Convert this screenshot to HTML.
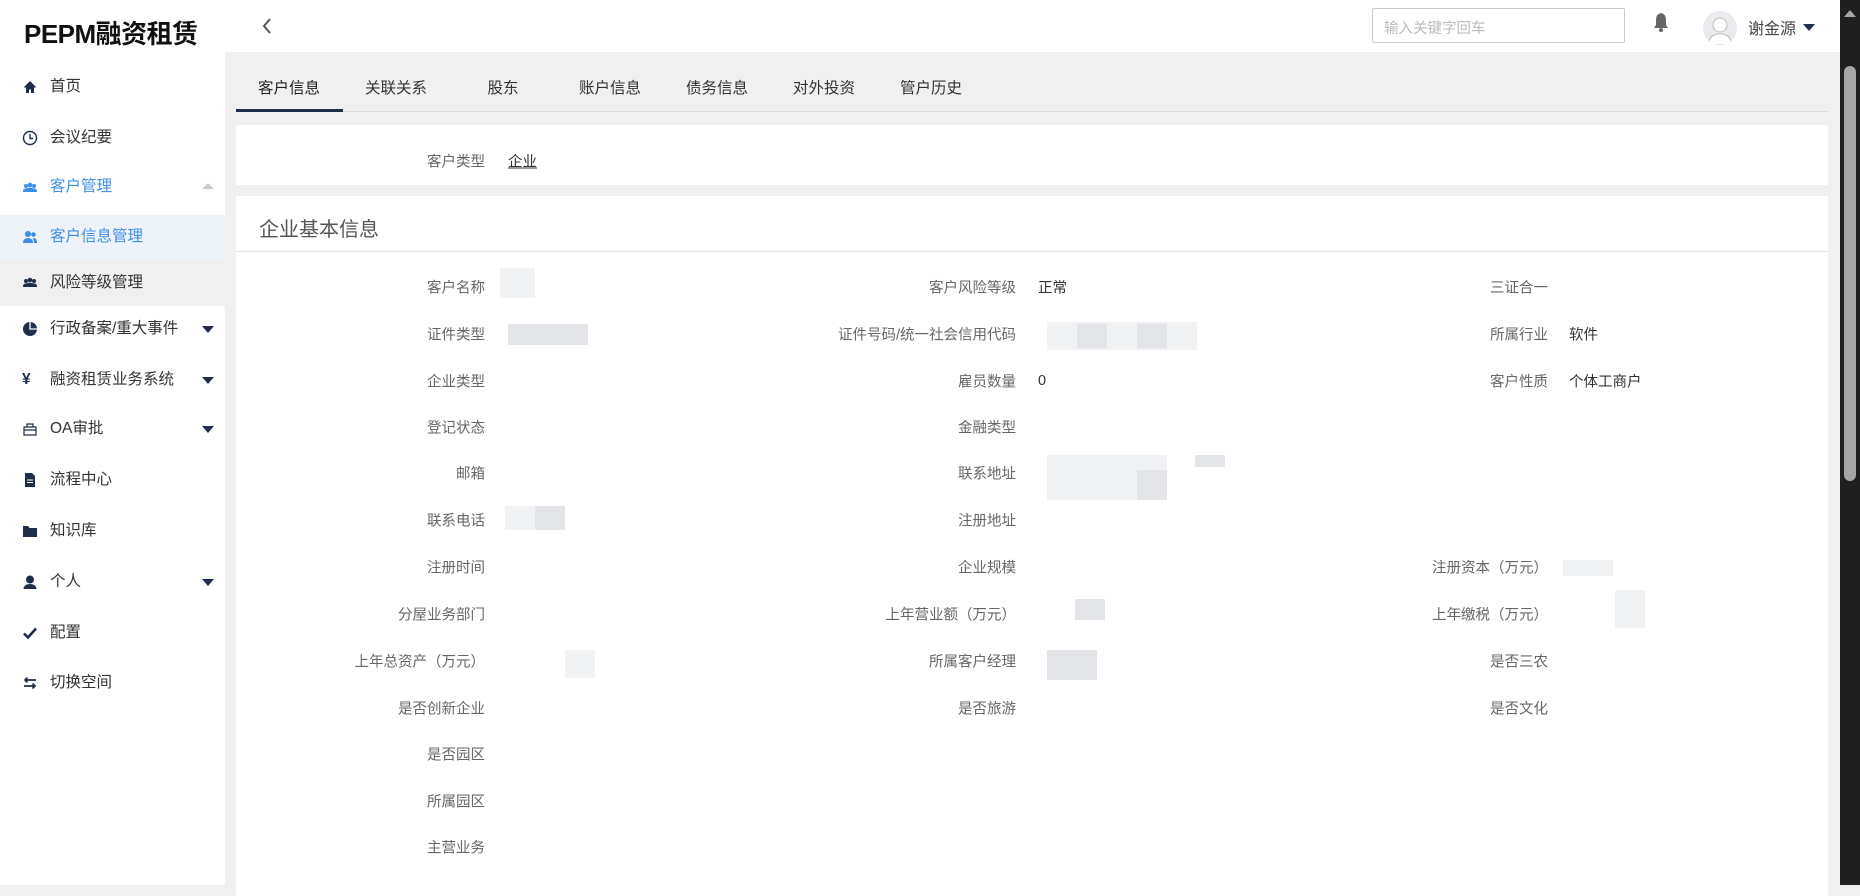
<!DOCTYPE html>
<html><head><meta charset="utf-8"><style>
*{margin:0;padding:0;box-sizing:border-box}
body{width:1860px;height:885px;overflow:hidden;background:#f0f0f0;font-family:"Liberation Sans","Noto Sans CJK SC",sans-serif;position:relative;color:#333}
.abs{position:absolute}
#side{left:0;top:0;width:225px;height:885px;background:#fff}
.logo{left:24px;top:14px;font-size:26px;font-weight:bold;color:#111;letter-spacing:-0.5px}
.mi{position:absolute;left:0;width:225px;height:46px;line-height:46px;font-size:15.5px;color:#333}
.mi .ic{position:absolute;left:22px;top:15px;width:16px;height:16px}
.mi .tx{position:absolute;left:50px}
.mi .ar{position:absolute;left:202px;top:20px;width:0;height:0;border-left:6px solid transparent;border-right:6px solid transparent;border-top:7px solid #1e2d4a}
#top{left:225px;top:0;width:1615px;height:52px;background:#fff}
.tab{position:absolute;top:76px;font-size:15.5px;color:#333;transform:translateX(-50%)}
.lbl{position:absolute;font-size:14.5px;color:#666;text-align:right;transform:translate(-100%,-50%);white-space:nowrap}
.val{position:absolute;font-size:14.5px;color:#333;transform:translateY(-50%);white-space:nowrap}
.bl{position:absolute;background:#e3e5e9}
.bl2{position:absolute;background:#f1f2f4}
</style></head><body>
<div id="side" class="abs">
<div class="abs logo">PEPM融资租赁</div>
<div class="mi" style="top:64px"><svg class="ic" viewBox="0 0 16 16"><path d="M8 2L1.5 8.5H4V14H7V10.5H9V14H12V8.5H14.5Z" fill="#1e2d4a"/></svg><span class="tx">首页</span></div>
<div class="mi" style="top:115px"><svg class="ic" viewBox="0 0 16 16"><circle cx="8" cy="8" r="6.5" fill="none" stroke="#1e2d4a" stroke-width="1.4"/><path d="M8 4V8.5H11" fill="none" stroke="#1e2d4a" stroke-width="1.4"/></svg><span class="tx">会议纪要</span></div>
<div class="mi" style="top:164px;color:#3d8fe8"><svg class="ic" viewBox="0 0 16 16"><circle cx="4" cy="7" r="2" fill="#3d8fe8"/><circle cx="8" cy="6" r="2.3" fill="#3d8fe8"/><circle cx="12" cy="7" r="2" fill="#3d8fe8"/><path d="M1 13Q1 9 4 9.5Q8 8 12 9.5Q15 9 15 13Z" fill="#3d8fe8"/></svg><span class="tx">客户管理</span><span style="position:absolute;left:202px;top:19px;border-left:6px solid transparent;border-right:6px solid transparent;border-bottom:6px solid #ccc"></span></div>
<div class="mi" style="top:215px;height:44px;line-height:44px;background:#eef3f9;color:#3d8fe8"><svg class="ic" viewBox="0 0 16 16" style="top:14px"><circle cx="6" cy="5" r="3" fill="#3d8fe8"/><circle cx="11.5" cy="5.5" r="2.3" fill="#3d8fe8"/><path d="M1 14Q1 9 6 9Q11 9 11 14Z M11.5 9Q15 9 15 14H12Q12 11 10.5 9.3Z" fill="#3d8fe8"/></svg><span class="tx">客户信息管理</span></div>
<div class="mi" style="top:259px;height:47px;line-height:47px;background:#f0f0f0"><svg class="ic" viewBox="0 0 16 16"><circle cx="4" cy="7" r="2" fill="#1e2d4a"/><circle cx="8" cy="6" r="2.3" fill="#1e2d4a"/><circle cx="12" cy="7" r="2" fill="#1e2d4a"/><path d="M1 13Q1 9 4 9.5Q8 8 12 9.5Q15 9 15 13Z" fill="#1e2d4a"/></svg><span class="tx">风险等级管理</span></div>
<div class="mi" style="top:306px"><svg class="ic" viewBox="0 0 16 16"><circle cx="8" cy="8" r="7" fill="#1e2d4a"/><path d="M8 1V8H15" fill="none" stroke="#fff" stroke-width="1.3"/></svg><span class="tx">行政备案/重大事件</span><span class="ar"></span></div>
<div class="mi" style="top:357px"><span style="position:absolute;left:22px;font-weight:bold;color:#1e2d4a">¥</span><span class="tx">融资租赁业务系统</span><span class="ar"></span></div>
<div class="mi" style="top:406px"><svg class="ic" viewBox="0 0 16 16"><path d="M2 6H14V14H2Z M2 9H14 M5 6V3H11V6" fill="none" stroke="#1e2d4a" stroke-width="1.2"/></svg><span class="tx">OA审批</span><span class="ar"></span></div>
<div class="mi" style="top:457px"><svg class="ic" viewBox="0 0 16 16"><path d="M3 1H10L13 4V15H3Z" fill="#1e2d4a"/><path d="M5 8H11M5 10.5H11" stroke="#fff" stroke-width="1"/></svg><span class="tx">流程中心</span></div>
<div class="mi" style="top:508px"><svg class="ic" viewBox="0 0 16 16"><path d="M1 3H6L7.5 5H15V14H1Z" fill="#1e2d4a"/></svg><span class="tx">知识库</span></div>
<div class="mi" style="top:559px"><svg class="ic" viewBox="0 0 16 16"><circle cx="8" cy="5.5" r="4" fill="#1e2d4a"/><path d="M1.5 15Q2 10 8 10Q14 10 14.5 15Z" fill="#1e2d4a"/></svg><span class="tx">个人</span><span class="ar"></span></div>
<div class="mi" style="top:610px"><svg class="ic" viewBox="0 0 16 16"><path d="M2 8.5L6 12.5L14 3.5" fill="none" stroke="#1e2d4a" stroke-width="2.6"/></svg><span class="tx">配置</span></div>
<div class="mi" style="top:660px"><svg class="ic" viewBox="0 0 16 16"><path d="M14 5H3M5.5 2.5L3 5L5.5 7.5M2 11H13M10.5 8.5L13 11L10.5 13.5" fill="none" stroke="#1e2d4a" stroke-width="1.7"/></svg><span class="tx">切换空间</span></div>
</div>
<div id="top" class="abs">
<svg class="abs" style="left:36px;top:17px" width="12" height="18" viewBox="0 0 12 18"><path d="M9 2L3 9L9 16" fill="none" stroke="#555" stroke-width="2"/></svg>
<div class="abs" style="left:1147px;top:8px;width:253px;height:35px;border:1px solid #ccc;border-radius:2px;font-size:14.5px;color:#bbb;padding:8px 11px">输入关键字回车</div>
<svg class="abs" style="left:1427px;top:11px" width="18" height="22" viewBox="0 0 18 22"><path d="M9 2Q4 3 4 9V14L2 17H16L14 14V9Q14 3 9 2Z" fill="#666"/><circle cx="9" cy="19" r="2" fill="#666"/></svg>
<div class="abs" style="left:1478px;top:11px;width:34px;height:34px;border-radius:50%;background:#ebebef;overflow:hidden"><svg width="34" height="34" viewBox="0 0 34 34"><circle cx="17" cy="14" r="7" fill="#fff" stroke="#bbb"/><path d="M5 34Q6 23 17 23Q28 23 29 34Z" fill="#fff" stroke="#bbb"/></svg></div>
<div class="abs" style="left:1523px;top:15px;font-size:16px;color:#444">谢金源</div>
<span class="abs" style="left:1578px;top:24px;border-left:6px solid transparent;border-right:6px solid transparent;border-top:7px solid #1e2d4a"></span>
</div>
<div class="abs" style="left:1840px;top:0;width:20px;height:885px;background:#1f1f1f"></div>
<div class="abs" style="left:1844px;top:66px;width:12px;height:415px;background:#a5a5a5;border-radius:6px"></div>
<span class="abs" style="left:1844px;top:10px;border-left:6px solid transparent;border-right:6px solid transparent;border-bottom:7px solid #a5a5a5"></span>

<div class="tab" style="left:289px;color:#222">客户信息</div>
<div class="tab" style="left:396px">关联关系</div>
<div class="tab" style="left:503px">股东</div>
<div class="tab" style="left:610px">账户信息</div>
<div class="tab" style="left:717px">债务信息</div>
<div class="tab" style="left:824px">对外投资</div>
<div class="tab" style="left:931px">管户历史</div>
<div class="abs" style="left:236px;top:111px;width:1592px;height:1px;background:#ddd"></div>
<div class="abs" style="left:236px;top:109px;width:107px;height:3px;background:#1e2d4a"></div>

<div class="abs" style="left:236px;top:125px;width:1592px;height:60px;background:#fff"></div>
<div class="lbl" style="left:485px;top:161px">客户类型</div>
<div class="val" style="left:508px;top:161px;text-decoration:underline">企业</div>

<div class="abs" style="left:236px;top:196px;width:1592px;height:700px;background:#fff"></div>
<div class="abs" style="left:259px;top:213px;font-size:20px;color:#555">企业基本信息</div>
<div class="abs" style="left:236px;top:251px;width:1592px;height:1px;background:#e6e6e6"></div>

<div class="lbl" style="left:485px;top:287px">客户名称</div>
<div class="lbl" style="left:1016px;top:287px">客户风险等级</div><div class="val" style="left:1038px;top:287px">正常</div>
<div class="lbl" style="left:1548px;top:287px">三证合一</div>
<div class="lbl" style="left:485px;top:334px">证件类型</div>
<div class="lbl" style="left:1016px;top:334px">证件号码/统一社会信用代码</div>
<div class="lbl" style="left:1548px;top:334px">所属行业</div><div class="val" style="left:1569px;top:334px">软件</div>
<div class="lbl" style="left:485px;top:381px">企业类型</div>
<div class="lbl" style="left:1016px;top:381px">雇员数量</div><div class="val" style="left:1038px;top:381px">0</div>
<div class="lbl" style="left:1548px;top:381px">客户性质</div><div class="val" style="left:1569px;top:381px">个体工商户</div>
<div class="lbl" style="left:485px;top:427px">登记状态</div>
<div class="lbl" style="left:1016px;top:427px">金融类型</div>
<div class="lbl" style="left:485px;top:473px">邮箱</div>
<div class="lbl" style="left:1016px;top:473px">联系地址</div>
<div class="lbl" style="left:485px;top:520px">联系电话</div>
<div class="lbl" style="left:1016px;top:520px">注册地址</div>
<div class="lbl" style="left:485px;top:567px">注册时间</div>
<div class="lbl" style="left:1016px;top:567px">企业规模</div>
<div class="lbl" style="left:1548px;top:567px">注册资本（万元）</div>
<div class="lbl" style="left:485px;top:614px">分屋业务部门</div>
<div class="lbl" style="left:1016px;top:614px">上年营业额（万元）</div>
<div class="lbl" style="left:1548px;top:614px">上年缴税（万元）</div>
<div class="lbl" style="left:485px;top:661px">上年总资产（万元）</div>
<div class="lbl" style="left:1016px;top:661px">所属客户经理</div>
<div class="lbl" style="left:1548px;top:661px">是否三农</div>
<div class="lbl" style="left:485px;top:708px">是否创新企业</div>
<div class="lbl" style="left:1016px;top:708px">是否旅游</div>
<div class="lbl" style="left:1548px;top:708px">是否文化</div>
<div class="lbl" style="left:485px;top:754px">是否园区</div>
<div class="lbl" style="left:485px;top:801px">所属园区</div>
<div class="lbl" style="left:485px;top:847px">主营业务</div>

<div class="bl2" style="left:500px;top:268px;width:35px;height:30px"></div>
<div class="bl" style="left:508px;top:324px;width:80px;height:21px"></div>
<div class="bl2" style="left:1047px;top:322px;width:150px;height:28px"></div>
<div class="bl" style="left:1077px;top:324px;width:30px;height:24px"></div>
<div class="bl" style="left:1137px;top:324px;width:30px;height:24px"></div>
<div class="bl2" style="left:1047px;top:455px;width:120px;height:45px"></div>
<div class="bl" style="left:1137px;top:470px;width:30px;height:30px"></div>
<div class="bl" style="left:1195px;top:455px;width:30px;height:12px"></div>
<div class="bl2" style="left:505px;top:506px;width:60px;height:24px"></div>
<div class="bl" style="left:535px;top:506px;width:30px;height:24px"></div>
<div class="bl2" style="left:1563px;top:560px;width:50px;height:16px"></div>
<div class="bl" style="left:1075px;top:599px;width:30px;height:21px"></div>
<div class="bl2" style="left:1615px;top:590px;width:30px;height:38px"></div>
<div class="bl2" style="left:565px;top:650px;width:30px;height:28px"></div>
<div class="bl" style="left:1047px;top:650px;width:50px;height:30px"></div>
</body></html>
